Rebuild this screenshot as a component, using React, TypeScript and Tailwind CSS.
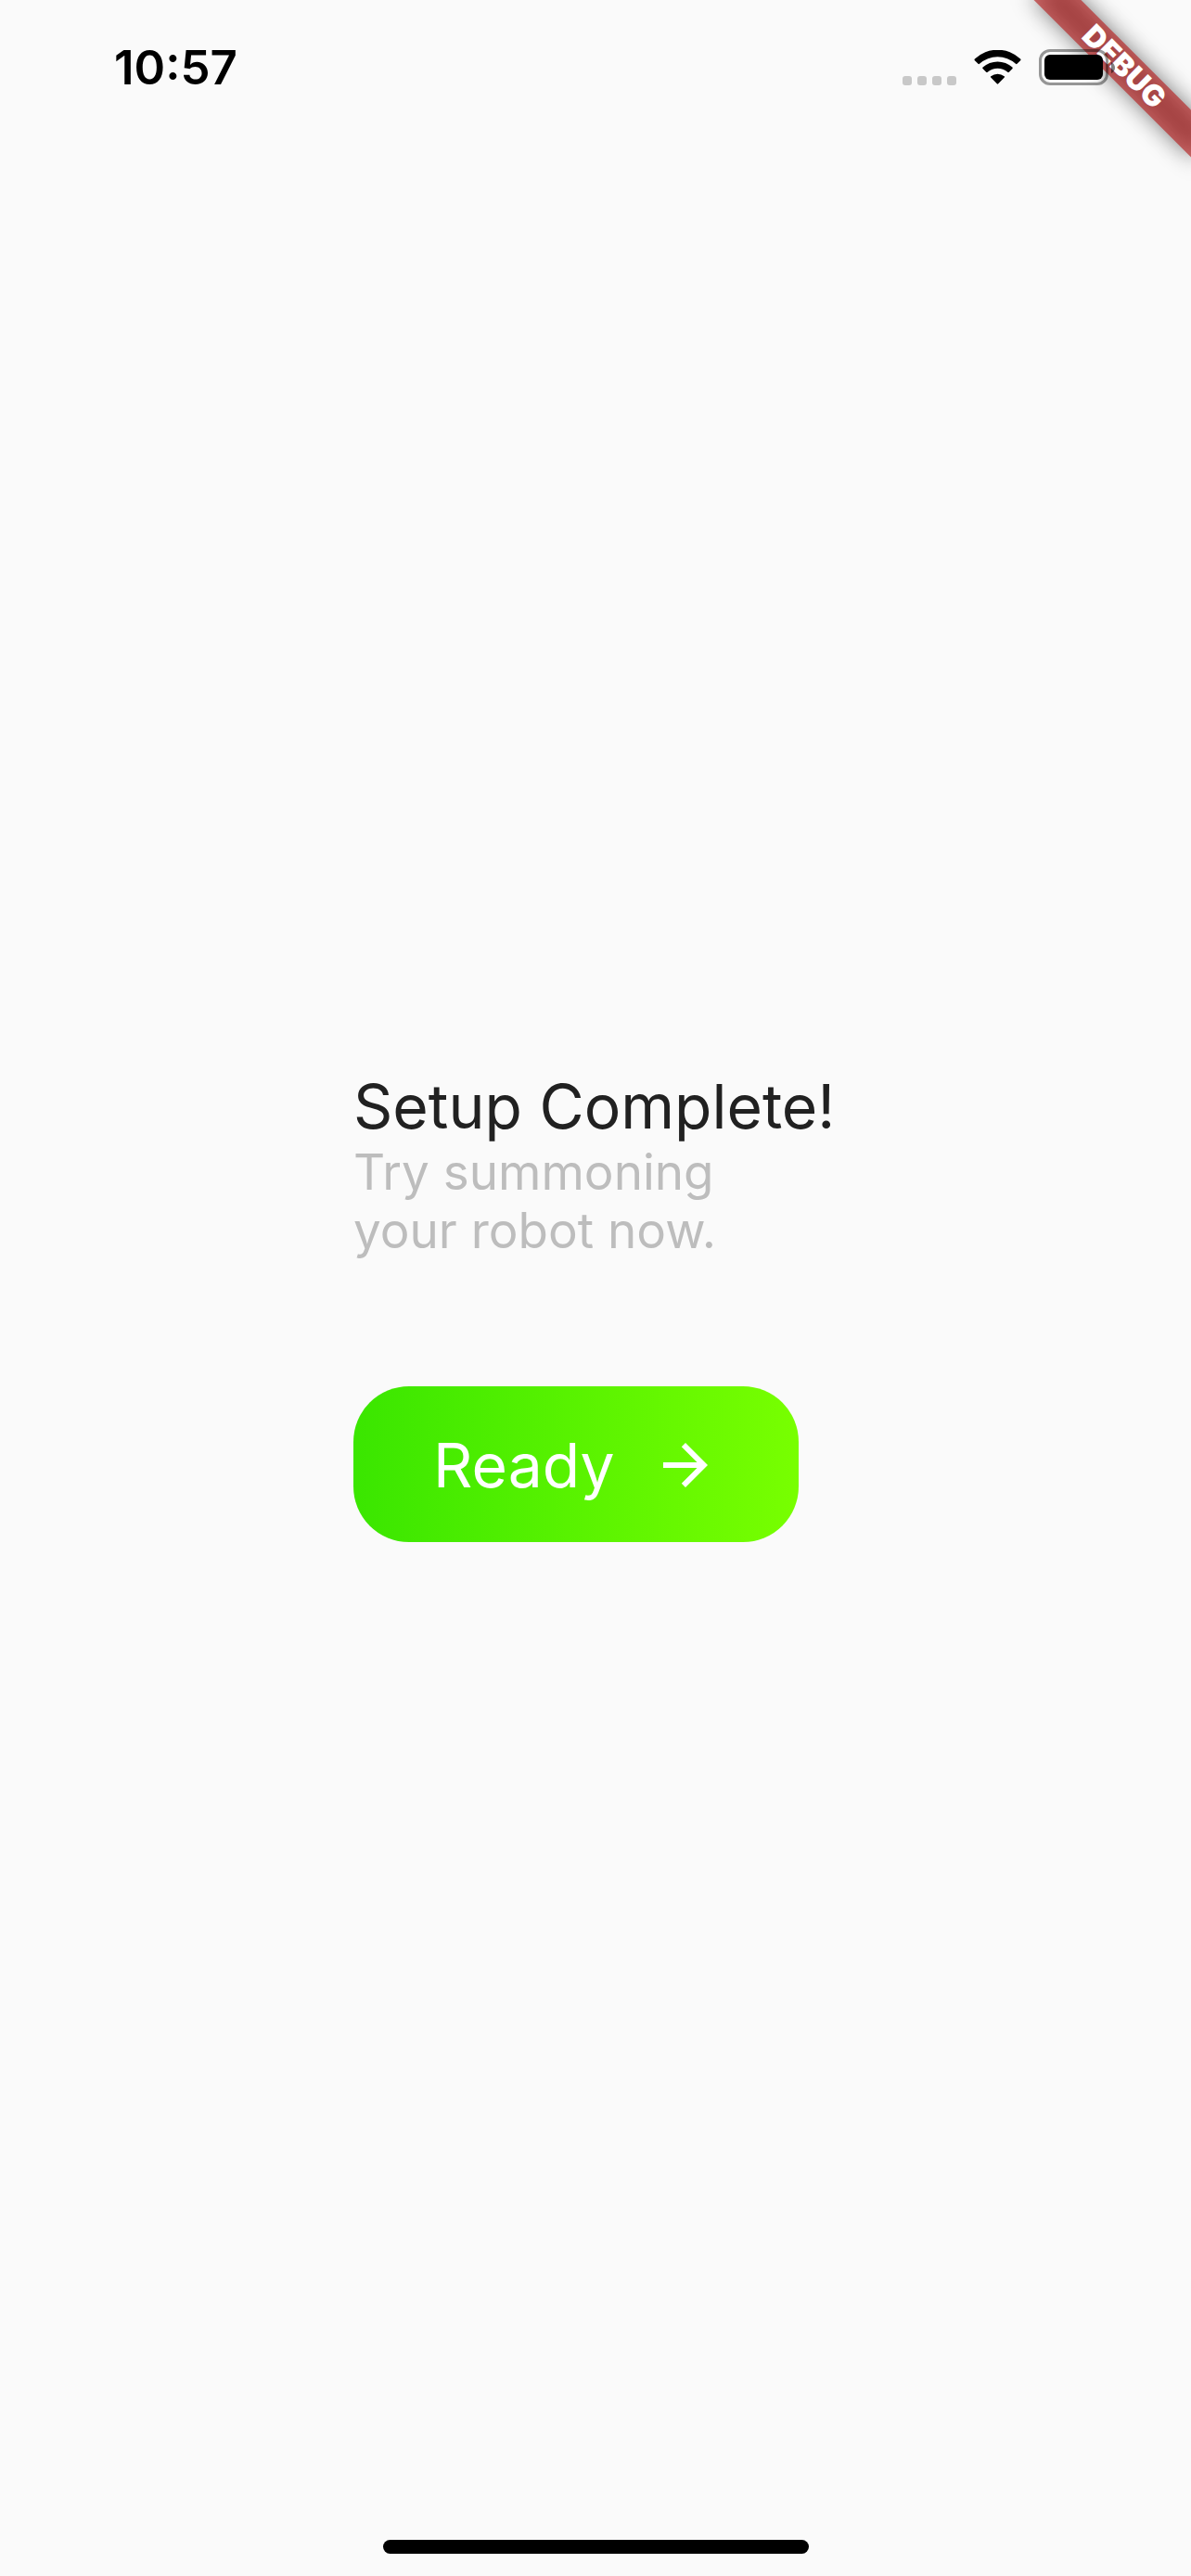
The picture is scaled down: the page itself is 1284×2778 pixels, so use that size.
function SignalDots() {
  return (
    <div className="flex gap-1.5" role="img" aria-label="No signal">
      {[0, 1, 2, 3].map((dot) => (
        <span key={dot} className="size-2.5 rounded-[3px] bg-[#c8c8c8]" />
      ))}
    </div>
  );
}

function WifiIcon() {
  return (
    <svg className="ml-[19px] h-[38px] w-[51px]" viewBox="0 0 51 38" fill="#000" role="img" aria-label="Wi-Fi">
      <path d="M.9 11.2Q.1 10.4.9 9.600A35.500 35.500 0 0 1 50.100 9.600Q50.900 10.400 50.100 11.200L46.500 14.800Q45.800 15.500 45 14.800A29 29 0 0 0 6 14.800Q5.200 15.500 4.500 14.800Z" />
      <path d="M9.5 20Q8.8 19.300 9.6 18.600A23.500 23.500 0 0 1 41.400 18.600Q42.200 19.300 41.500 20L37.800 23.700Q37.100 24.400 36.300 23.700A16.800 16.800 0 0 0 14.700 23.700Q13.900 24.400 13.200 23.700Z" />
      <path d="M18.200 29.500Q17.500 28.800 18.300 28.200A11.500 11.500 0 0 1 32.700 28.200Q33.500 28.800 32.800 29.500L26.200 36.300Q25.500 37 24.800 36.300Z" />
    </svg>
  );
}

function Battery() {
  return (
    <div className="relative z-10 ml-[19px] flex items-center gap-[3px]" role="img" aria-label="Battery full">
      <div className="h-[39px] w-[75px] rounded-xl border-[3px] border-black/40 p-[3px]">
        <div className="h-full rounded-[6px] bg-black" />
      </div>
      <svg className="h-3 w-1" viewBox="0 0 4 12" fill="#000" fillOpacity="0.5">
        <path d="M0 0Q4 2 4 6T0 12Z" />
      </svg>
    </div>
  );
}

function DebugBanner() {
  return (
    <div className="pointer-events-none absolute top-0 right-0 size-60 overflow-hidden">
      <div className="absolute top-[54px] -right-12 h-9 w-60 rotate-45">
        <div className="absolute inset-0 bg-black/50 blur-[12px]" />
        <div className="relative flex h-full items-center justify-center bg-[#b71c1c]/63 text-[32px] leading-9 font-black text-white">
          DEBUG
        </div>
      </div>
    </div>
  );
}

export default function App() {
  return (
    <div className="relative flex min-h-screen flex-col overflow-hidden bg-[#fafafa] font-['Inter',sans-serif]">
      <DebugBanner />
      <header className="flex h-[141px] items-start justify-between pt-[53px] pr-[82px] pl-[123px]">
        <time className="text-[51px] leading-10 font-semibold text-black">10:57</time>
        <div className="flex items-end">
          <SignalDots />
          <WifiIcon />
          <Battery />
        </div>
      </header>

      <main className="flex flex-1 items-center justify-center">
        <div className="w-[522px]">
          <h1 className="text-[66px] leading-[79px] whitespace-nowrap text-[#212121]">Setup Complete!</h1>
          <p className="text-[53px] leading-[63px] text-[#bdbdbd]">
            Try summoning
            <br />
            your robot now.
          </p>
          <button
            type="button"
            className="mt-[136px] flex h-[168px] w-[480px] items-center justify-between rounded-[60px] bg-linear-to-r/srgb from-[#3ae600] to-[#78ff00] px-[86px] pt-0.5 text-[66px] text-white"
          >
            Ready
            <svg className="size-[72px]" viewBox="0 0 24 24" fill="currentColor" aria-hidden="true">
              <path d="M12 4l-1.410 1.410L16.170 11H4v2h12.170l-5.580 5.590L12 20l8-8z" />
            </svg>
          </button>
        </div>
      </main>

      <footer className="flex h-[102px] items-end justify-center pb-6">
        <div className="h-[15px] w-[459px] rounded-full bg-black" />
      </footer>
    </div>
  );
}
